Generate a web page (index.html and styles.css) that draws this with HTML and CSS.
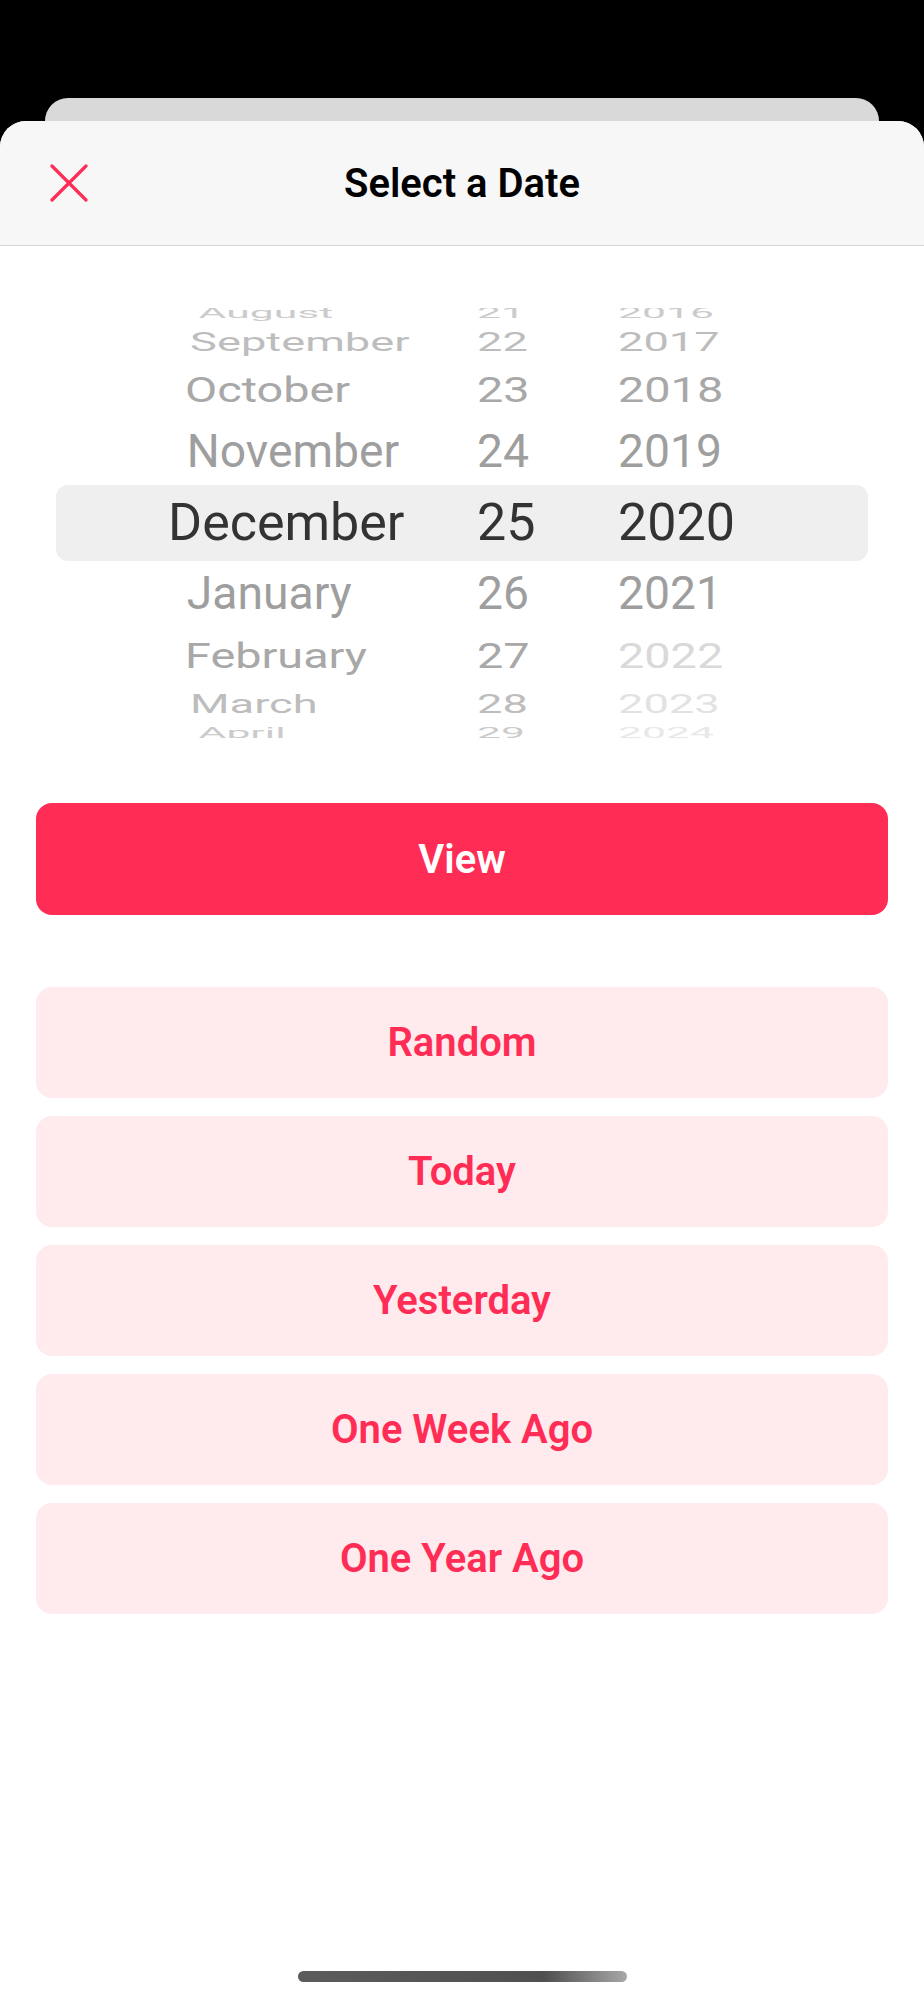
FILE: index.html
```html
<!DOCTYPE html>
<html lang="en">

<head>
    <meta charset="UTF-8">
    <meta name="viewport" content="width=device-width, initial-scale=1.0">
    <title>Select a Date</title>
    <link rel="stylesheet" href="styles.css">
</head>

<body>
    <div class="back-card"></div>
    <div class="sheet">
        <header class="sheet-header">
            <button class="close-btn" aria-label="Close">
                <svg width="38" height="38" viewBox="0 0 38 38">
                    <path d="M2 2 L36 36 M36 2 L2 36" stroke="#ff2d55" stroke-width="3.2" stroke-linecap="round" fill="none"/>
                </svg>
            </button>
            <h1>Select a Date</h1>
            <span></span>
        </header>

        <section class="picker">
            <div class="row d4"><span class="month"><i>August</i></span><span class="day"><i>21</i></span><span class="year"><i>2016</i></span></div>
            <div class="row d3"><span class="month"><i>September</i></span><span class="day"><i>22</i></span><span class="year"><i>2017</i></span></div>
            <div class="row d2"><span class="month"><i>October</i></span><span class="day"><i>23</i></span><span class="year"><i>2018</i></span></div>
            <div class="row d1"><span class="month"><i>November</i></span><span class="day"><i>24</i></span><span class="year"><i>2019</i></span></div>
            <div class="row d0 selected"><span class="month"><i>December</i></span><span class="day"><i>25</i></span><span class="year"><i>2020</i></span></div>
            <div class="row d1"><span class="month"><i>January</i></span><span class="day"><i>26</i></span><span class="year"><i>2021</i></span></div>
            <div class="row d2"><span class="month"><i>February</i></span><span class="day"><i>27</i></span><span class="year off"><i>2022</i></span></div>
            <div class="row d3"><span class="month"><i>March</i></span><span class="day"><i>28</i></span><span class="year off"><i>2023</i></span></div>
            <div class="row d4"><span class="month"><i>April</i></span><span class="day"><i>29</i></span><span class="year off"><i>2024</i></span></div>
        </section>

        <div class="actions">
            <button class="btn btn-primary">View</button>
            <div class="quick-list">
                <button class="btn btn-soft">Random</button>
                <button class="btn btn-soft">Today</button>
                <button class="btn btn-soft">Yesterday</button>
                <button class="btn btn-soft">One Week Ago</button>
                <button class="btn btn-soft">One Year Ago</button>
            </div>
        </div>

        <div class="home-bar"></div>
    </div>
</body>

</html>
```

FILE: styles.css
```css
body {
    margin: 0;
    padding-top: 98px;
    background: #000;
    font-family: Roboto, "Liberation Sans", Arial, sans-serif;
}

.back-card {
    height: 23px;
    margin: 0 45px;
    background: #d9d9d9;
    border-radius: 24px 24px 0 0;
}

.sheet {
    display: flex;
    flex-direction: column;
    min-height: calc(100vh - 121px);
    background: #fff;
    border-radius: 26px 26px 0 0;
    overflow: hidden;
}

.sheet-header {
    display: grid;
    grid-template-columns: 1fr auto 1fr;
    align-items: center;
    height: 124px;
    padding: 0 50px;
    background: #f7f7f7;
    border-bottom: 1px solid #d6d6d6;
}

.sheet-header h1 {
    margin: 0;
    font-size: 40px;
    font-weight: 600;
    color: #000;
}

.close-btn {
    justify-self: start;
    display: flex;
    padding: 0;
    background: none;
    border: none;
    cursor: pointer;
}

/* date wheel */
.picker {
    display: flex;
    flex-direction: column;
    justify-content: center;
    height: 430px;
    margin-top: 62px;
    overflow: hidden;
}

.row {
    display: flex;
    align-items: center;
    flex: none;
    margin: 0 56px;
    padding-left: 112px;
    font-size: 52px;
    color: var(--c);
}

.row span {
    flex: none;
    line-height: 1;
    white-space: nowrap;
}

.row .month { width: 309px; }
.row .day { width: 141px; }

.row i {
    display: inline-block;
    font-style: normal;
    transform: scale(var(--sx), var(--sy));
    transform-origin: left center;
}

.row .month i {
    transform-origin: 170px center;
}

.row .off {
    color: var(--off);
}

.d0 { height: 76px; --sx: 1; --sy: 1; --c: #333; }
.d1 { height: 66px; --sx: .89; --sy: .89; --c: #9e9e9e; --off: #d6d6d6; }
.d2 { height: 58px; --sx: .9; --sy: .68; --c: #a8a8a8; --off: #d9d9d9; }
.d3 { height: 38px; --sx: .87; --sy: .5; --c: #bdbdbd; --off: #e2e2e2; }
.d4 { height: 20px; --sx: .82; --sy: .27; --c: #cbcbcb; --off: #e8e8e8; }

.selected {
    background: #efefef;
    border-radius: 12px;
}

/* buttons */
.actions {
    display: flex;
    flex-direction: column;
    gap: 72px;
    margin: 65px 36px 0;
}

.quick-list {
    display: flex;
    flex-direction: column;
    gap: 18px;
}

.btn {
    height: 112px;
    border: none;
    border-radius: 16px;
    font-family: inherit;
    font-size: 40px;
    font-weight: 600;
    cursor: pointer;
}

.btn-primary {
    background: #ff2d55;
    color: #fff;
}

.btn-soft {
    height: 111px;
    background: #ffeaee;
    color: #ff2d55;
}

.home-bar {
    width: 329px;
    height: 11px;
    margin: auto auto 18px;
    border-radius: 6px;
    background: linear-gradient(90deg, #5c5c5c 0%, #505050 75%, #a8a8a8 100%);
}
```
